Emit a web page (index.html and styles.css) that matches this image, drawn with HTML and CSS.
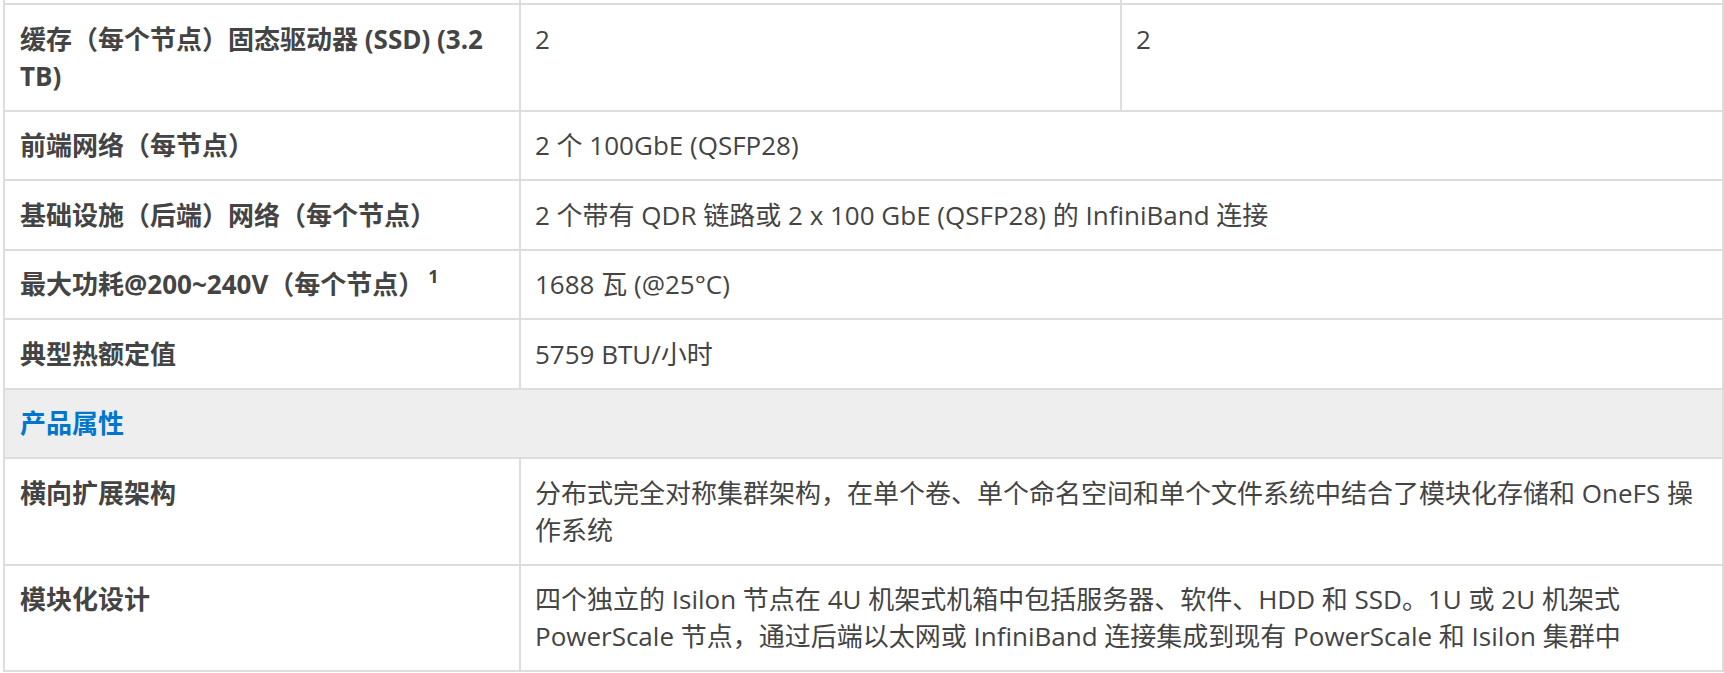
FILE: index.html
```html
<!DOCTYPE html>
<html lang="zh-CN">
<head>
<meta charset="utf-8">
<title>规格</title>
<link rel="stylesheet" href="styles.css">
</head>
<body>
<div class="spec">
  <div class="cell cut"></div><div class="cell cut"></div><div class="cell cut"></div>

  <div class="cell label">缓存（每个节点）固态驱动器 (SSD) (3.2 TB)</div>
  <div class="cell value">2</div>
  <div class="cell value">2</div>

  <div class="cell label">前端网络（每节点）</div>
  <div class="cell value span">2 个 100GbE (QSFP28)</div>

  <div class="cell label">基础设施（后端）网络（每个节点）</div>
  <div class="cell value span">2 个带有 QDR 链路或 2 x 100 GbE (QSFP28) 的 InfiniBand 连接</div>

  <div class="cell label">最大功耗@200~240V（每个节点）<sup class="note">1</sup></div>
  <div class="cell value span">1688 瓦 (@25°C)</div>

  <div class="cell label">典型热额定值</div>
  <div class="cell value span">5759 BTU/小时</div>

  <div class="cell section">产品属性</div>

  <div class="cell label">横向扩展架构</div>
  <div class="cell value span">分布式完全对称集群架构，在单个卷、单个命名空间和单个文件系统中结合了模块化存储和 OneFS 操作系统</div>

  <div class="cell label">模块化设计</div>
  <div class="cell value span">四个独立的 Isilon 节点在 4U 机架式机箱中包括服务器、软件、HDD 和 SSD。1U 或 2U 机架式 PowerScale 节点，通过后端以太网或 InfiniBand 连接集成到现有 PowerScale 和 Isilon 集群中</div>
</div>
</body>
</html>
```

FILE: styles.css
```css
html, body {
  margin: 0;
  padding: 0;
  background: #ffffff;
}

body {
  font-family: "Open Sans", "Noto Sans CJK SC", sans-serif;
  font-size: 26px;
  line-height: 37px;
  color: #444444;
}

.spec {
  display: grid;
  grid-template-columns: 516px 601px 602px;
  margin-left: 3px;
  border-left: 2px solid #dddddd;
}

.cell {
  box-sizing: border-box;
  border-right: 2px solid #dddddd;
  border-bottom: 2px solid #dddddd;
  padding: 15.5px 15px 15px 15px;
}

.cut {
  height: 5px;
  padding: 0;
}

.label {
  font-weight: 700;
  color: #444444;
  padding-left: 15px;
}

.value {
  font-weight: 400;
  color: #444444;
  padding-left: 14px;
}

.span {
  grid-column: 2 / 4;
}

.section {
  grid-column: 1 / 4;
  background: #eeeeee;
  color: #0076ce;
  font-weight: 700;
  padding-left: 15px;
}

.note {
  font-size: 18px;
  line-height: 0;
  vertical-align: 11px;
  margin-left: 4px;
}
```
